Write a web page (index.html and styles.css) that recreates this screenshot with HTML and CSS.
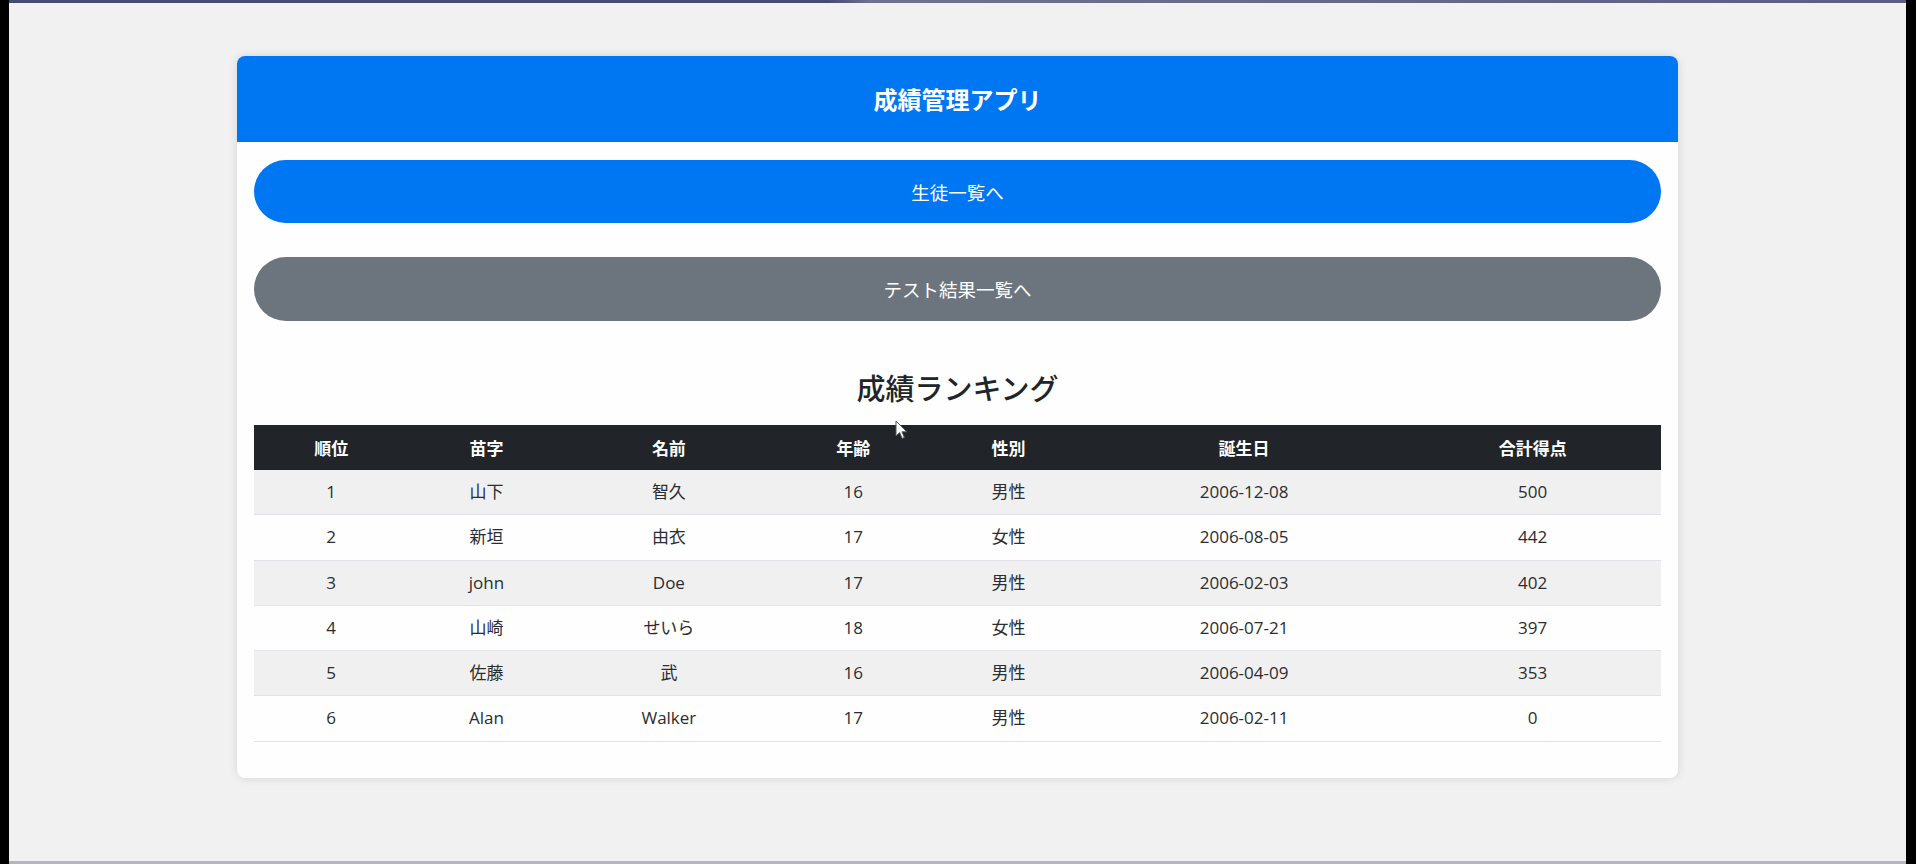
FILE: index.html
```html
<!DOCTYPE html>
<html lang="ja">
<head>
<meta charset="utf-8">
<title>成績管理アプリ</title>
<link rel="stylesheet" href="styles.css">
</head>
<body>
<div class="edge edge-left"></div>
<div class="screen">
  <div class="topbar"></div>
  <div class="stage">
    <div class="card">
      <header class="card-header">
        <h1 class="app-title">成績管理アプリ</h1>
      </header>
      <div class="card-body">
        <a class="btn btn-primary" href="#">生徒一覧へ</a>
        <a class="btn btn-secondary" href="#">テスト結果一覧へ</a>
        <h2 class="section-title">成績ランキング</h2>
        <table class="ranking">
          <colgroup>
            <col class="c1"><col class="c2"><col class="c3"><col class="c4"><col class="c5"><col class="c6"><col class="c7">
          </colgroup>
          <thead>
            <tr><th>順位</th><th>苗字</th><th>名前</th><th>年齢</th><th>性別</th><th>誕生日</th><th>合計得点</th></tr>
          </thead>
          <tbody>
            <tr><td>1</td><td>山下</td><td>智久</td><td>16</td><td>男性</td><td>2006-12-08</td><td>500</td></tr>
            <tr><td>2</td><td>新垣</td><td>由衣</td><td>17</td><td>女性</td><td>2006-08-05</td><td>442</td></tr>
            <tr><td>3</td><td>john</td><td>Doe</td><td>17</td><td>男性</td><td>2006-02-03</td><td>402</td></tr>
            <tr><td>4</td><td>山崎</td><td>せいら</td><td>18</td><td>女性</td><td>2006-07-21</td><td>397</td></tr>
            <tr><td>5</td><td>佐藤</td><td>武</td><td>16</td><td>男性</td><td>2006-04-09</td><td>353</td></tr>
            <tr><td>6</td><td>Alan</td><td>Walker</td><td>17</td><td>男性</td><td>2006-02-11</td><td>0</td></tr>
          </tbody>
        </table>
      </div>
    </div>
    <svg class="cursor" width="13" height="20" viewBox="0 0 13 20" aria-hidden="true">
      <path d="M1 1 L1 16 L4.6 12.6 L7.2 18.4 L9.4 17.4 L6.9 11.8 L11.8 11.8 Z" fill="#ffffff" stroke="#555" stroke-width="1" stroke-linejoin="round"/>
    </svg>
  </div>
  <div class="bottombar"></div>
</div>
<div class="edge edge-right"></div>
</body>
</html>
```

FILE: styles.css
```css
html, body {
  margin: 0;
  padding: 0;
}

body {
  display: flex;
  width: 1916px;
  height: 864px;
  overflow: hidden;
  background: #000;
  font-family: "Open Sans", "Noto Sans CJK JP", sans-serif;
  color: #212529;
}

.edge {
  background: #000;
  flex: none;
}

.edge-left {
  width: 9px;
}

.edge-right {
  width: 10px;
}

.screen {
  flex: 1;
  display: flex;
  flex-direction: column;
  background: #f1f1f1;
}

.topbar {
  height: 3px;
  flex: none;
  background: linear-gradient(to right, #464b72 0, #464b72 820px, #6e7290 860px, #5a5f82 100%);
}

.bottombar {
  height: 3px;
  flex: none;
  background: #b4b5bd;
}

.stage {
  flex: 1;
  position: relative;
  padding-top: 53px;
}

.card {
  width: 1441px;
  margin: 0 auto;
  background: #fefefe;
  border-radius: 8px;
  box-shadow: 0 0 10px rgba(0, 0, 0, 0.12);
  overflow: hidden;
}

.card-header {
  height: 86px;
  background: #0077f2;
  display: flex;
  align-items: center;
  justify-content: center;
}

.app-title {
  margin: 0;
  color: #ffffff;
  font-family: "Noto Sans CJK JP", sans-serif;
  font-size: 24px;
  font-weight: 700;
  line-height: 1;
}

.card-body {
  padding: 18px 17px 36px;
  display: flex;
  flex-direction: column;
}

.btn {
  display: flex;
  align-items: center;
  justify-content: center;
  height: 63px;
  border-radius: 32px;
  color: #ffffff;
  text-decoration: none;
  font-family: "Noto Sans CJK JP", sans-serif;
  font-size: 18.5px;
}

.btn-primary {
  background: #0077f2;
}

.btn-secondary {
  background: #6c757d;
  margin-top: 34px;
  height: 64px;
}

.section-title {
  margin: 49px 0 20px;
  text-align: center;
  font-family: "Noto Sans CJK JP", sans-serif;
  font-size: 29px;
  font-weight: 500;
  line-height: 35px;
  color: #212529;
}

.ranking {
  width: 100%;
  table-layout: fixed;
  border-collapse: collapse;
  font-size: 17px;
}

.c1 { width: 154px; }
.c2 { width: 156px; }
.c3 { width: 208px; }
.c4 { width: 160px; }
.c5 { width: 150px; }
.c6 { width: 320px; }
.c7 { width: 256px; }

.ranking th {
  background: #212428;
  color: #ffffff;
  font-weight: 700;
  height: 45px;
  padding: 0;
  line-height: 45px;
  text-align: center;
  font-family: "Noto Sans CJK JP", sans-serif;
  font-size: 17px;
}

.ranking td {
  padding: 10px 0;
  line-height: 24.3px;
  text-align: center;
  border-bottom: 1px solid #dfe2e6;
  color: #2a2d31;
}

.ranking tbody tr:nth-child(odd) td {
  background: #f0f0f0;
}

.cursor {
  position: absolute;
  left: 886px;
  top: 417px;
}
```
